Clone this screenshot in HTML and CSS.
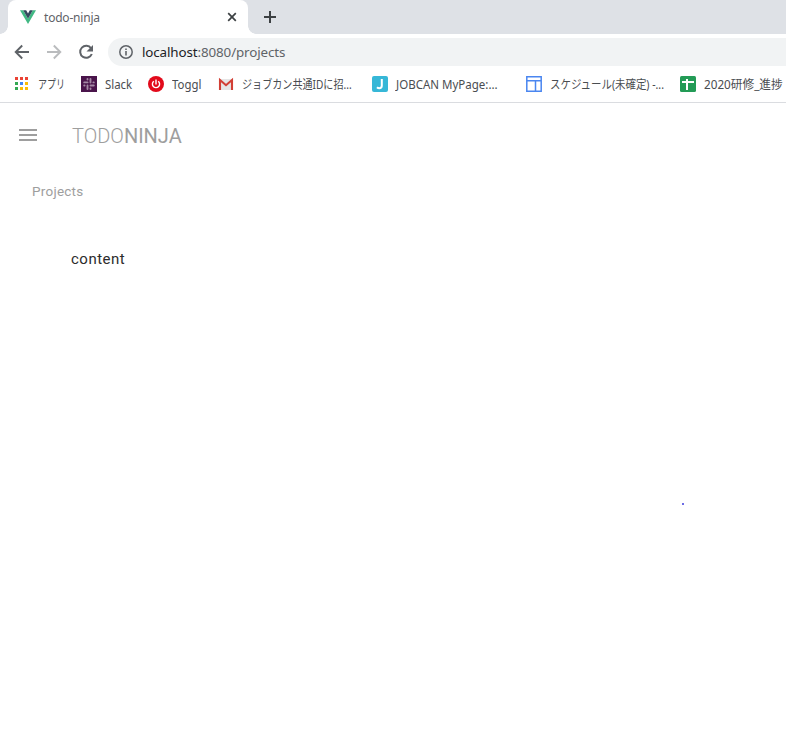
FILE: index.html
```
<!DOCTYPE html>
<html lang="ja">
<head>
<meta charset="utf-8">
<title>todo-ninja</title>
<link rel="stylesheet" href="styles.css">
</head>
<body>
<header class="browser">
  <div class="tabs">
    <div class="tab">
      <svg class="vue" width="16" height="16" viewBox="0 0 16 16"><path fill="#41b883" d="M0 1.2h3.2L8 9.8l4.8-8.6H16L8 15z"/><path fill="#34495e" d="M3.2 1.2h3L8 4.4l1.8-3.2h3L8 9.8z"/></svg>
      <span class="tab-title">todo-ninja</span>
      <svg class="close" width="10" height="10" viewBox="0 0 10 10"><path d="M1.2 1.2l7.6 7.6M8.8 1.2L1.2 8.8" stroke="#3c4043" stroke-width="1.7"/></svg>
    </div>
    <svg class="plus" width="12" height="12" viewBox="0 0 12 12"><path d="M6 0v12M0 6h12" stroke="#3c4043" stroke-width="2"/></svg>
  </div>
  <nav class="toolbar">
    <svg width="16" height="16" viewBox="0 0 16 16"><path d="M15 8H2M8.2 1.5L1.7 8l6.5 6.5" fill="none" stroke="#5f6368" stroke-width="1.9"/></svg>
    <svg width="16" height="16" viewBox="0 0 16 16"><path d="M1 8h13M7.8 1.5L14.3 8l-6.5 6.5" fill="none" stroke="#babcbe" stroke-width="1.9"/></svg>
    <svg width="16" height="16" viewBox="0 0 16 16"><path d="M13.1 4.3A6 6 0 1 0 13.8 10" fill="none" stroke="#5f6368" stroke-width="2"/><path fill="#5f6368" d="M15 1v6.5H8.5z"/></svg>
    <div class="address">
      <svg width="14" height="14" viewBox="0 0 14 14"><circle cx="7" cy="7" r="6.2" fill="none" stroke="#5f6368" stroke-width="1.5"/><path d="M7 6v4.5M7 3.5V5" stroke="#5f6368" stroke-width="1.6"/></svg>
      <span class="url"><b>localhost</b>:8080/projects</span>
    </div>
  </nav>
  <nav class="bookmarks">
    <a class="bm apps"><svg width="16" height="16" viewBox="0 0 16 16"><path fill="#ea4335" d="M1 1h3v3H1zM6 1h3v3H6zM11 1h3v3h-3z"/><path fill="#34a853" d="M1 6h3v3H1zM1 11h3v3H1z"/><path fill="#4285f4" d="M6 6h3v3H6z"/><path fill="#fbbc05" d="M11 6h3v3h-3zM6 11h3v3H6zM11 11h3v3h-3z"/></svg><span>アプリ</span></a>
    <a class="bm slack"><svg width="16" height="16" viewBox="0 0 16 16"><path fill="#4a154b" d="M0 0h16v16H0z"/><path d="M6.5 3v.6M3.2 6.4h3.4M9.5 3v3.5M12.4 6.4h.4M3.2 9.5h.4M6.5 9.5V13M9.5 9.5h3.3M9.5 12.4v.6" stroke="#a58aa6" stroke-width="1.9" stroke-linecap="round"/></svg><span>Slack</span></a>
    <a class="bm toggl"><svg width="16" height="16" viewBox="0 0 16 16"><circle cx="8" cy="8" r="8" fill="#e20a1b"/><path d="M8 3.4v5M5.8 5.2a3.6 3.6 0 1 0 4.4 0" fill="none" stroke="#fff" stroke-width="1.4"/></svg><span>Toggl</span></a>
    <a class="bm mail"><svg width="16" height="16" viewBox="0 0 16 16"><path fill="#e6e6e6" d="M1 3h14v11H1z"/><path d="M2 14V4l6 5.2L14 4v10" fill="none" stroke="#d23f35" stroke-width="2.1"/></svg><span>ジョブカン共通IDに招...</span></a>
    <a class="bm jobcan"><svg width="16" height="16" viewBox="0 0 16 16"><rect width="16" height="16" rx="2" fill="#36b7d7"/><path d="M9.8 3v6.8q0 2.4-2.4 2.4-1.5 0-2.4-.9" fill="none" stroke="#fff" stroke-width="2"/></svg><span>JOBCAN MyPage:...</span></a>
    <a class="bm sched"><svg width="16" height="16" viewBox="0 0 16 16"><path d="M.8.8h14.4v14.4H.8zM1 4.8h14M9.5 4.8V15" fill="#fff" stroke="#4a86f0" stroke-width="1.5"/></svg><span>スケジュール(未確定) -...</span></a>
    <a class="bm sheet"><svg width="16" height="16" viewBox="0 0 16 16"><rect width="16" height="16" rx="1.5" fill="#239b56"/><path d="M2 6h12M7 3v11" stroke="#fff" stroke-width="2"/></svg><span>2020研修_進捗</span></a>
  </nav>
</header>
<main class="app">
  <div class="appbar">
    <svg width="18" height="12" viewBox="0 0 18 12"><path fill="#9e9e9e" d="M0 0h18v2H0zM0 5h18v2H0zM0 10h18v2H0z"/></svg>
    <h1><span>TODO</span><strong>NINJA</strong></h1>
  </div>
  <h2>Projects</h2>
  <p>content</p>
  <i class="dot"></i>
</main>
</body>
</html>
```
FILE: styles.css
```
* { box-sizing: border-box; }
body { margin: 0; background: #fff; overflow: hidden; font-family: Roboto, "Liberation Sans", sans-serif; }
svg { display: block; flex: none; }
.browser { height: 103px; border-bottom: 1px solid #dadce0; font-family: "Noto Sans", "Noto Sans CJK JP", sans-serif; }
.tabs { display: flex; height: 34px; padding-left: 8px; background: #dee1e6; }
.tab { position: relative; display: flex; align-items: center; width: 240px; padding: 0 11px 0 12px; background: #fff; border-radius: 8px 8px 0 0; }
.tab::before, .tab::after { content: ""; position: absolute; bottom: 0; width: 8px; height: 8px; }
.tab::before { left: -8px; background: radial-gradient(circle at 0 0, transparent 7.5px, #fff 8px); }
.tab::after { right: -8px; background: radial-gradient(circle at 100% 0, transparent 7.5px, #fff 8px); }
.tab-title { flex: 1; margin-left: 8px; font-size: 12px; letter-spacing: -.2px; color: #5f6368; }
.plus { margin: 11px 0 0 16px; }
.toolbar { display: flex; align-items: center; gap: 16px; height: 36px; padding-left: 14px; }
.address { display: flex; align-items: center; flex: 1; height: 28px; margin-left: -2px; padding-left: 11px; border-radius: 14px 0 0 14px; background: #f1f3f4; }
.url { margin-left: 9px; font-size: 13.4px; letter-spacing: -.12px; color: #5f6368; white-space: nowrap; }
.url b { font-weight: 400; color: #202124; }
.bookmarks { display: flex; align-items: center; height: 28px; padding-left: 14px; }
.bm { display: flex; align-items: center; flex: none; gap: 8px; height: 28px; font-size: 12px; color: #4a4d51; white-space: nowrap; }
.bm span { transform-origin: 0 50%; }
.apps { width: 67px; }
.apps span { transform: scaleX(.75); }
.slack { width: 67px; }
.slack span, .toggl span { transform: scaleX(.95); }
.toggl { width: 70px; }
.mail { width: 154px; }
.mail span { transform: scaleX(.84); }
.jobcan { width: 154px; }
.jobcan span { transform: scaleX(.96); }
.sched { width: 154px; }
.sched span { transform: scaleX(.87); }
.sheet { width: 106px; }
.sheet span { transform: scaleX(.975); }
.appbar { display: flex; align-items: center; height: 64px; padding-left: 19px; }
h1 { margin: 1px 0 0 35px; font-size: 20px; line-height: 24px; font-weight: 300; color: #9e9e9e; }
h1 strong { font-weight: 400; }
h2 { margin: 14px 0 0 32px; font-size: 13.5px; letter-spacing: .25px; line-height: 20px; font-weight: 400; color: #9e9e9e; }
p { margin: 46px 0 0 71px; font-size: 15px; letter-spacing: .5px; line-height: 24px; color: #2c2c2c; }
.dot { position: absolute; left: 682px; top: 503px; width: 2px; height: 2px; background: #3b3bdc; border-radius: 1px; }
```
